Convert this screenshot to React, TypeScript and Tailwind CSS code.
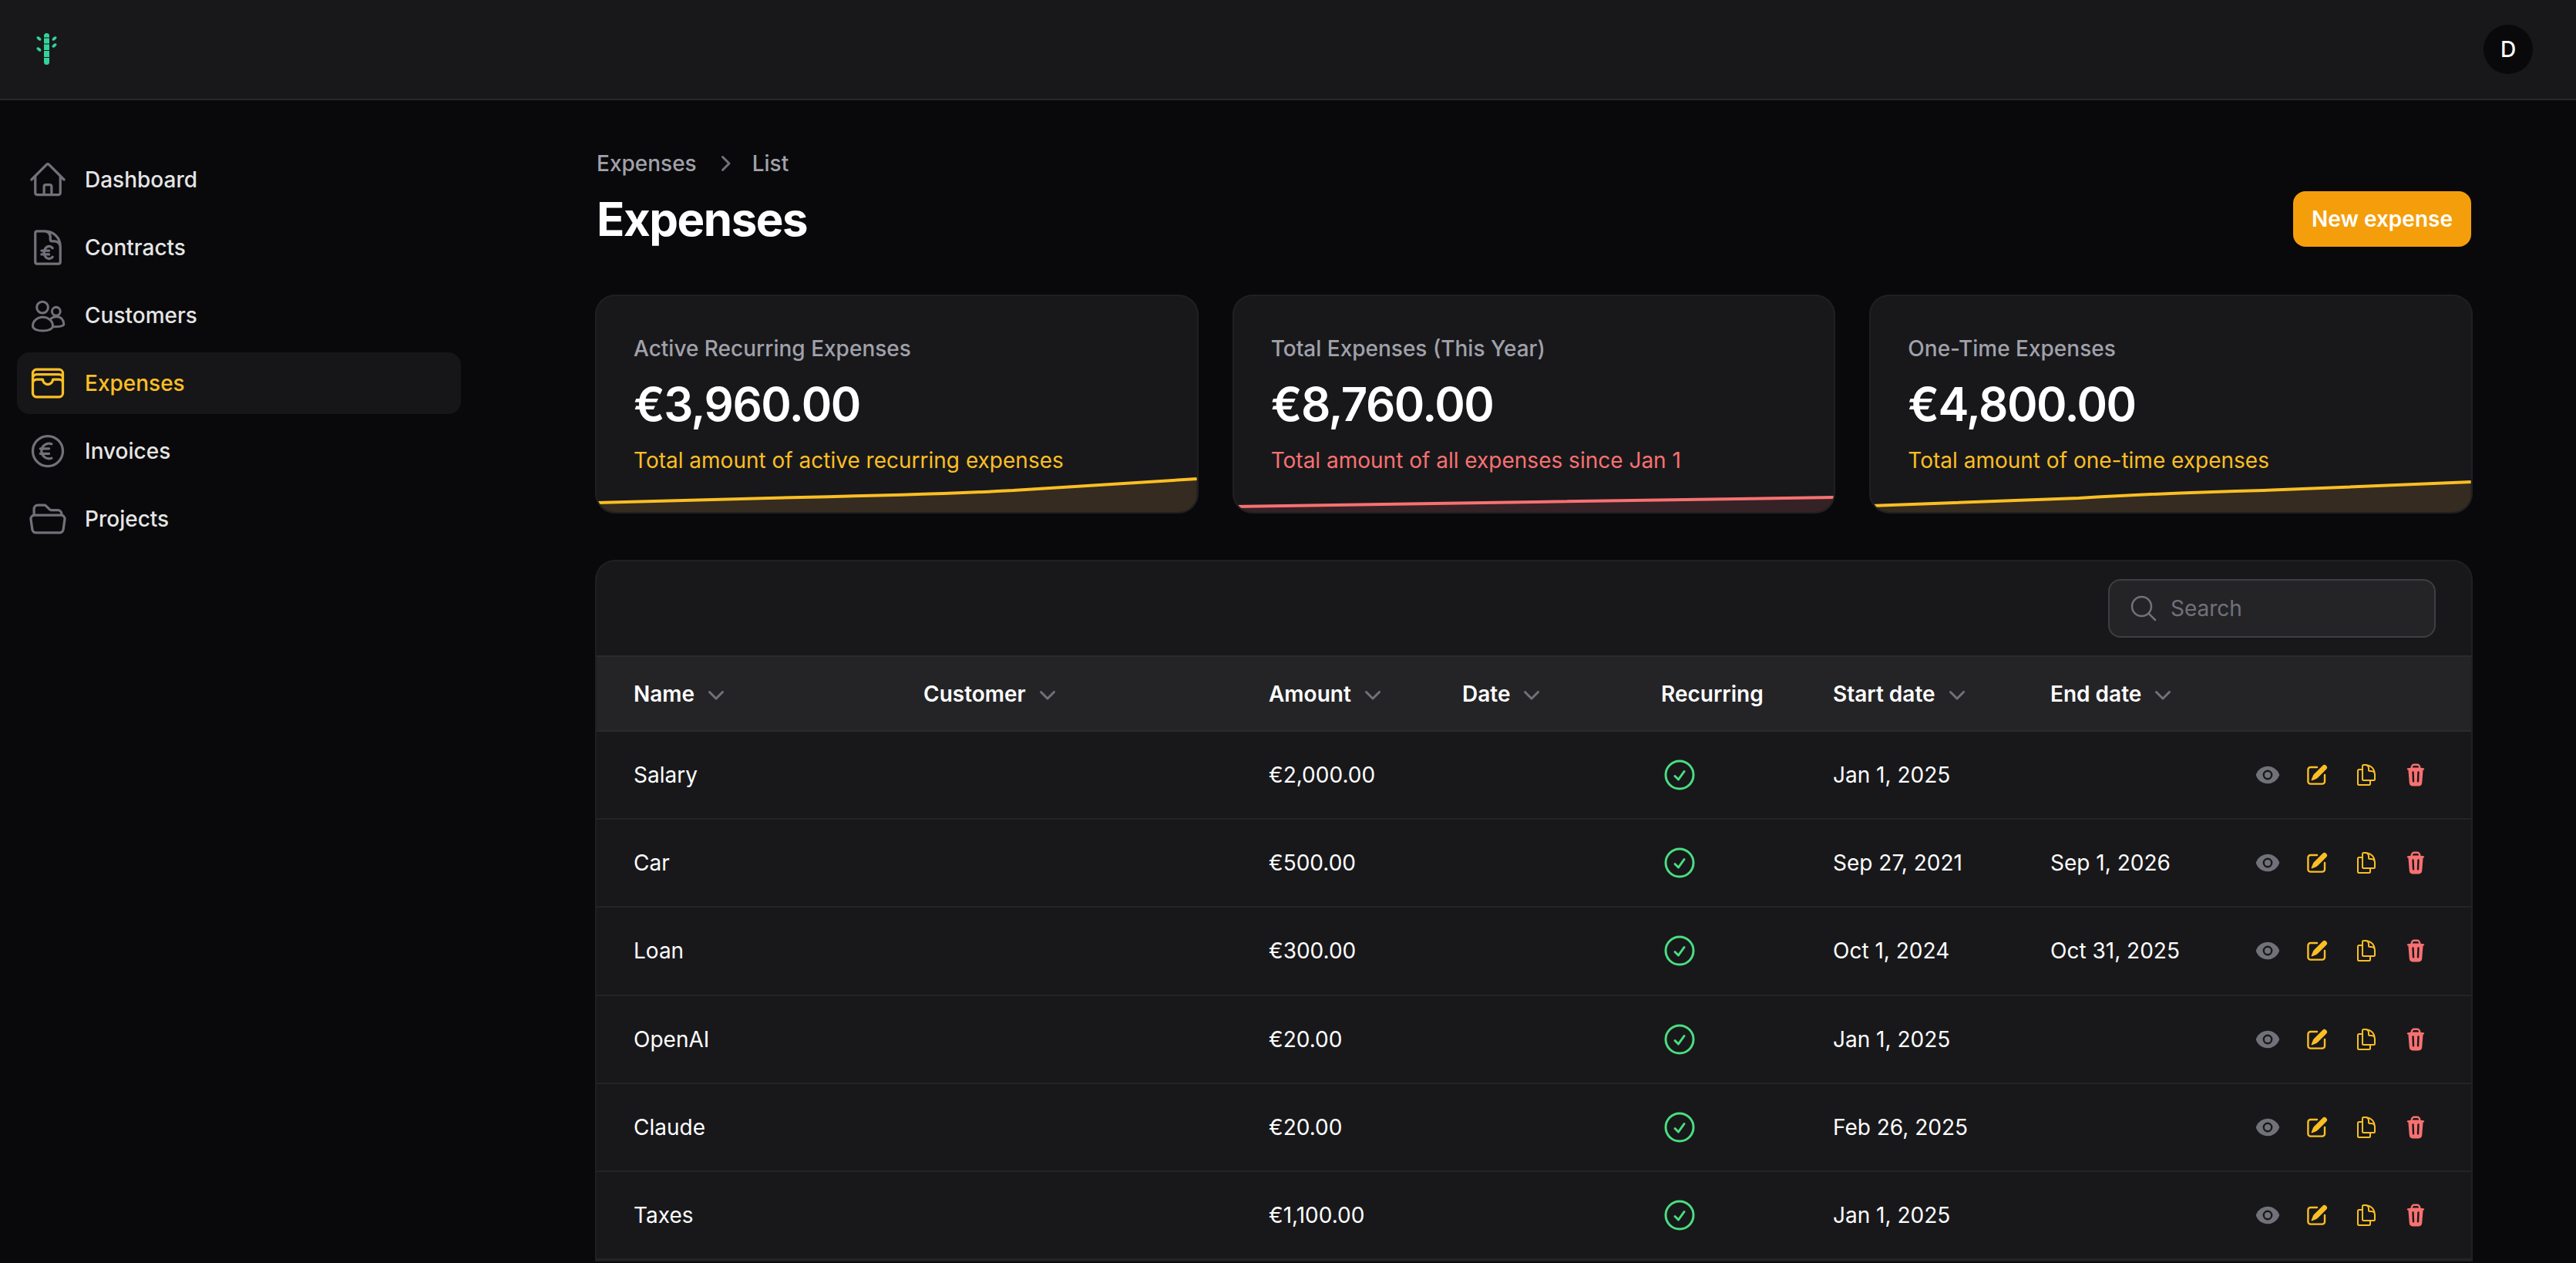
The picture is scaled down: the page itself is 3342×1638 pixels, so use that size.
import React from "react";
import {
  HiOutlineHome,
  HiOutlineDocumentCurrencyEuro,
  HiOutlineWallet,
  HiOutlineCurrencyEuro,
  HiOutlineFolderOpen,
  HiOutlineCheckCircle,
  HiOutlineMagnifyingGlass,
  HiOutlineDocumentDuplicate,
  HiMiniChevronDown,
  HiMiniChevronRight,
  HiMiniEye,
  HiMiniPencilSquare,
  HiMiniTrash,
} from "react-icons/hi2";

function PeopleIcon({ className }: { className?: string }) {
  return (
    <svg viewBox="0 0 24 24" fill="none" stroke="currentColor" strokeWidth={1.4} className={className}>
      <circle cx="8.8" cy="7.2" r="3.4" />
      <circle cx="17" cy="9.6" r="2.5" />
      <path d="M3 18.4c0-2.9 2.7-5.4 6-5.4 3.4 0 6 2.5 6 5.4 0 1.7-2.6 2.8-6 2.8s-6-1.1-6-2.8Z" />
      <path d="M13.4 14.5c.8-1 2.3-1.7 4-1.7 2.4 0 4.2 2 4.2 4.4 0 1.2-2.7 1.8-6.7 1.6" />
    </svg>
  );
}

function Logo() {
  return (
    <svg viewBox="0 0 32 44" className="h-[44px] w-[32px]">
      <rect x="11" y="1" width="7" height="41" rx="3.5" fill="#34d399" />
      <g stroke="#18181b" strokeWidth="1">
        <line x1="11" y1="7" x2="18" y2="7" />
        <line x1="11" y1="15" x2="18" y2="15" />
        <line x1="11" y1="23.5" x2="18" y2="23.5" />
        <line x1="11" y1="32.5" x2="18" y2="32.5" />
      </g>
      <g fill="#34d399">
        <ellipse cx="4.5" cy="8" rx="3.4" ry="1.9" transform="rotate(40 4.5 8)" />
        <ellipse cx="24.5" cy="8" rx="3.4" ry="1.9" transform="rotate(-40 24.5 8)" />
        <ellipse cx="4.5" cy="22" rx="3.4" ry="1.9" transform="rotate(40 4.5 22)" />
        <ellipse cx="24.5" cy="17" rx="3.4" ry="1.9" transform="rotate(-40 24.5 17)" />
      </g>
    </svg>
  );
}

const nav = [
  { label: "Dashboard", Icon: HiOutlineHome },
  { label: "Contracts", Icon: HiOutlineDocumentCurrencyEuro },
  { label: "Customers", Icon: PeopleIcon },
  { label: "Expenses", Icon: HiOutlineWallet, active: true },
  { label: "Invoices", Icon: HiOutlineCurrencyEuro },
  { label: "Projects", Icon: HiOutlineFolderOpen },
];

function Sparkline({ line, area, stroke, fill }: { line: string; area: string; stroke: string; fill: string }) {
  return (
    <div className="absolute inset-x-0 bottom-0 h-[48px] overflow-hidden rounded-b-[24px]">
      <svg viewBox="0 0 778 48" preserveAspectRatio="none" className="h-[48px] w-full">
        <path d={area} fill={fill} />
        <path d={line} fill="none" stroke={stroke} strokeWidth={4} />
      </svg>
    </div>
  );
}

const cards = [
  {
    label: "Active Recurring Expenses",
    value: "€3,960.00",
    desc: "Total amount of active recurring expenses",
    color: "text-[#fbbf24]",
    stroke: "#fbbf24",
    fill: "#352b20",
    line: "M0 36 C90 33 180 31 265 29 C360 27 450 25 540 20 C620 15 700 10 778 5",
  },
  {
    label: "Total Expenses (This Year)",
    value: "€8,760.00",
    desc: "Total amount of all expenses since Jan 1",
    color: "text-[#f87171]",
    stroke: "#f87171",
    fill: "#352226",
    line: "M0 41 C130 40 260 38 390 35 C520 32 650 31 778 29",
  },
  {
    label: "One-Time Expenses",
    value: "€4,800.00",
    desc: "Total amount of one-time expenses",
    color: "text-[#fbbf24]",
    stroke: "#fbbf24",
    fill: "#352b20",
    line: "M0 40 C90 37 180 34 270 30 C350 25 430 22 510 20 C600 17 690 13 778 9",
  },
];

const rows = [
  ["Salary", "€2,000.00", "Jan 1, 2025", ""],
  ["Car", "€500.00", "Sep 27, 2021", "Sep 1, 2026"],
  ["Loan", "€300.00", "Oct 1, 2024", "Oct 31, 2025"],
  ["OpenAI", "€20.00", "Jan 1, 2025", ""],
  ["Claude", "€20.00", "Feb 26, 2025", ""],
  ["Taxes", "€1,100.00", "Jan 1, 2025", ""],
];

const gridCols = "grid grid-cols-[376px_448px_251px_258px_223px_282px_240px_1fr] items-center";

function Head({ children, sort = true }: { children: string; sort?: boolean }) {
  return (
    <div className="flex items-center gap-[8px] pl-[48px] text-[28px] leading-[40px] font-semibold text-white">
      <span>{children}</span>
      {sort && <HiMiniChevronDown className="h-[40px] w-[40px] text-[#71717a]" />}
    </div>
  );
}

export default function App() {
  return (
    <div
      className="h-[1638px] w-[3342px] overflow-hidden bg-[#09090b] text-white"
      style={{ fontFamily: "Inter, 'Noto Sans', sans-serif" }}
    >
      <header className="flex h-[130px] items-center justify-between border-b-2 border-[#27272a] bg-[#18181b] pr-[56px] pl-[46px]">
        <Logo />
        <div className="flex h-[64px] w-[64px] items-center justify-center rounded-full bg-[#09090b] text-[28px] font-medium text-white">
          D
        </div>
      </header>
      <div className="flex">
        <aside className="w-[640px] shrink-0 pt-[63px] pl-[22px]">
          <nav className="flex w-[576px] flex-col gap-[8px]">
            {nav.map(({ label, Icon, active }) => (
              <div
                key={label}
                className={`flex h-[80px] items-center gap-[22px] rounded-[16px] px-[14px] ${active ? "bg-[#161618]" : ""}`}
              >
                <Icon className={`h-[52px] w-[52px] ${active ? "text-[#fbbf24]" : "text-[#71717a]"}`} />
                <span className={`text-[28px] leading-[40px] font-medium ${active ? "text-[#fbbf24]" : "text-[#e5e5e5]"}`}>
                  {label}
                </span>
              </div>
            ))}
          </nav>
        </aside>
        <main className="ml-[134px] w-[2432px] shrink-0">
          <div className="flex items-end justify-between pt-[62px]">
            <div>
              <div className="flex items-center gap-[16px] text-[28px] leading-[40px] font-medium text-[#a1a1aa]">
                <span>Expenses</span>
                <HiMiniChevronRight className="h-[40px] w-[40px] text-[#71717a]" />
                <span>List</span>
              </div>
              <h1 className="mt-[16px] text-[60px] leading-[72px] font-bold tracking-[-1.5px] text-white">Expenses</h1>
            </div>
            <button className="h-[72px] w-[231px] rounded-[16px] bg-[#f59e0b] text-[28px] font-semibold text-white">
              New expense
            </button>
          </div>

          <div className="mt-[64px] grid grid-cols-3 gap-[48px]">
            {cards.map((c) => (
              <div
                key={c.label}
                className="relative h-[280px] rounded-[24px] bg-[#18181b] p-[48px] shadow-[0_0_0_2px_#202023]"
              >
                <div className="text-[28px] leading-[40px] font-medium text-[#a1a1aa]">{c.label}</div>
                <div className="mt-[16px] text-[60px] leading-[72px] font-semibold tracking-[-1.5px] text-white">{c.value}</div>
                <div className={`mt-[17px] text-[28px] leading-[40px] ${c.color}`}>{c.desc}</div>
                <Sparkline line={c.line} area={`${c.line} L778 48 L0 48 Z`} stroke={c.stroke} fill={c.fill} />
              </div>
            ))}
          </div>

          <div className="mt-[64px] rounded-t-[24px] bg-[#18181b] shadow-[0_0_0_2px_#202023]">
            <div className="flex h-[122px] items-center justify-end pr-[46px]">
              <div className="flex h-[76px] w-[425px] items-center gap-[15px] rounded-[16px] border-2 border-[#3f3f43] bg-[#242427] pl-[24px]">
                <HiOutlineMagnifyingGlass className="h-[40px] w-[40px] text-[#71717a]" />
                <span className="text-[28px] text-[#71717a]">Search</span>
              </div>
            </div>
            <div className={`${gridCols} h-[99px] border-y-2 border-[#2b2b2e] bg-[#242427]`}>
              <Head>Name</Head>
              <Head>Customer</Head>
              <Head>Amount</Head>
              <Head>Date</Head>
              <Head sort={false}>Recurring</Head>
              <Head>Start date</Head>
              <Head>End date</Head>
              <div />
            </div>
            {rows.map(([name, amount, start, end]) => (
              <div key={name} className={`${gridCols} h-[114.2px] border-b-2 border-[#242427] text-[28px] leading-[40px] text-white`}>
                <div className="pl-[48px]">{name}</div>
                <div />
                <div className="pl-[48px]">{amount}</div>
                <div />
                <div className="pl-[48px]">
                  <HiOutlineCheckCircle className="h-[48px] w-[48px] text-[#4ade80]" />
                </div>
                <div className="pl-[48px]">{start}</div>
                <div className="pl-[48px]">{end}</div>
                <div className="flex items-center justify-end gap-[32px] pr-[56px]">
                  <HiMiniEye className="h-[32px] w-[32px] text-[#71717a]" />
                  <HiMiniPencilSquare className="h-[32px] w-[32px] text-[#fbbf24]" />
                  <HiOutlineDocumentDuplicate className="h-[32px] w-[32px] text-[#fbbf24]" />
                  <HiMiniTrash className="h-[32px] w-[32px] text-[#f87171]" />
                </div>
              </div>
            ))}
          </div>
        </main>
      </div>
    </div>
  );
}
